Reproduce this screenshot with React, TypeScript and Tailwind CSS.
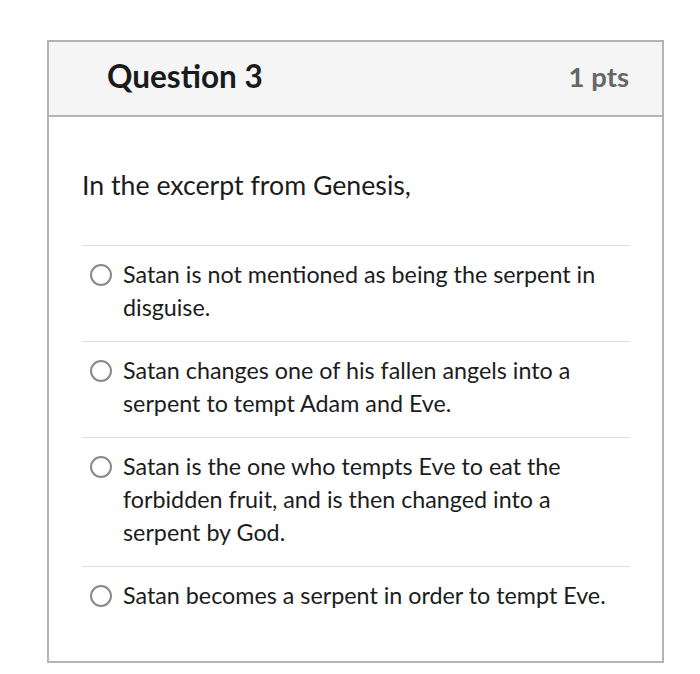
const options = [
  "Satan is not mentioned as being the serpent in disguise.",
  "Satan changes one of his fallen angels into a serpent to tempt Adam and Eve.",
  "Satan is the one who tempts Eve to eat the forbidden fruit, and is then changed into a serpent by God.",
  "Satan becomes a serpent in order to tempt Eve.",
];

export default function App() {
  return (
    <div className="min-h-[674px] w-[700px] bg-white pl-[47px] pt-[40px] font-['Lato','Liberation_Sans',sans-serif] text-[#1c1c1c]">
      <div className="flex h-[623px] w-[617px] flex-col border-2 border-[#b4b4b4]">
        <div className="flex h-[75px] items-center justify-between border-b-2 border-[#b4b4b4] bg-[#f5f5f5] pb-[4px] pl-[58px] pr-[33px]">
          <h2 className="text-[31.5px] font-bold text-[#1a1a1a]">Question 3</h2>
          <span className="text-[27.5px] font-bold text-[#666]">1 pts</span>
        </div>
        <div className="pl-[33px] pr-[32px] pt-[50px]">
          <p className="mb-[42px] text-[26.7px] leading-[36px]">In the excerpt from Genesis,</p>
          {options.map((opt) => (
            <label key={opt} className="flex gap-[11px] border-t border-[#dedede] pl-[8px] pt-[12px] pb-[17px]">
              <span className="mt-[5.5px] h-[22px] w-[22px] shrink-0 rounded-full border-2 border-[#8a8a8a] bg-white" />
              <span className="text-[23.3px] leading-[33px]">{opt}</span>
            </label>
          ))}
        </div>
      </div>
    </div>
  );
}
